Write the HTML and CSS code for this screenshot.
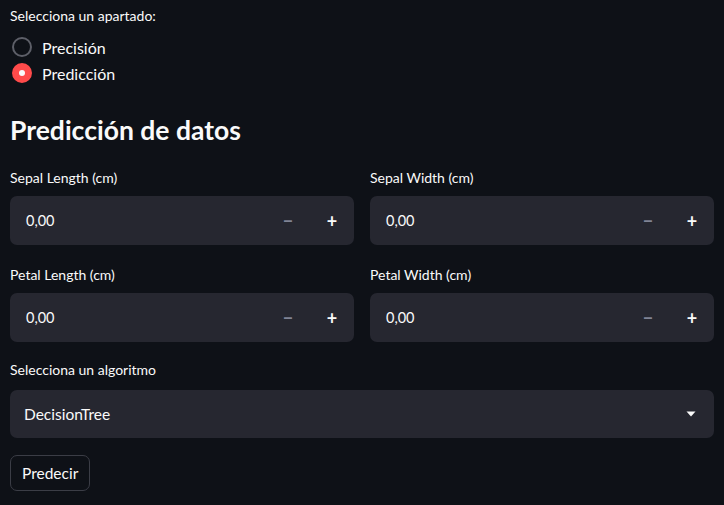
FILE: index.html
```html
<!DOCTYPE html>
<html lang="es">
<head>
<meta charset="utf-8">
<link rel="stylesheet" href="styles.css">
</head>
<body>
<main class="app">
  <section class="radio-group">
    <div class="label first">Selecciona un apartado:</div>
    <div class="options">
      <div class="option"><span class="dot"></span><span>Precisión</span></div>
      <div class="option"><span class="dot on"></span><span>Predicción</span></div>
    </div>
  </section>

  <h2 class="title">Predicción de datos</h2>

  <section class="grid">
    <div class="field">
      <div class="label">Sepal Length (cm)</div>
      <div class="num">
        <span class="val">0,00</span>
        <span class="step minus">−</span>
        <span class="step plus">+</span>
      </div>
    </div>
    <div class="field">
      <div class="label">Sepal Width (cm)</div>
      <div class="num">
        <span class="val">0,00</span>
        <span class="step minus">−</span>
        <span class="step plus">+</span>
      </div>
    </div>
    <div class="field">
      <div class="label">Petal Length (cm)</div>
      <div class="num">
        <span class="val">0,00</span>
        <span class="step minus">−</span>
        <span class="step plus">+</span>
      </div>
    </div>
    <div class="field">
      <div class="label">Petal Width (cm)</div>
      <div class="num">
        <span class="val">0,00</span>
        <span class="step minus">−</span>
        <span class="step plus">+</span>
      </div>
    </div>
  </section>

  <section class="field select-field">
    <div class="label">Selecciona un algoritmo</div>
    <div class="select">
      <span class="val">DecisionTree</span>
      <svg class="caret" width="10" height="6" viewBox="0 0 10 6"><path d="M0.5 0.5h9L5 5.5z" fill="#fafafa"/></svg>
    </div>
  </section>

  <button class="btn">Predecir</button>
</main>
</body>
</html>
```

FILE: styles.css
```css
html, body {
  margin: 0;
  padding: 0;
  background: #0e1117;
}
body {
  font-family: Lato, "Noto Sans", sans-serif;
  color: #fafafa;
}
.app {
  padding: 0 10px;
  display: flex;
  flex-direction: column;
}
.label {
  font-size: 14px;
  line-height: 20px;
  height: 20px;
}
.label.first {
  margin-top: 6px;
}
.options {
  margin-top: 8px;
  display: flex;
  flex-direction: column;
}
.option {
  height: 26px;
  display: flex;
  align-items: center;
  gap: 10px;
  font-size: 16px;
}
.dot {
  width: 20px;
  height: 20px;
  box-sizing: border-box;
  border-radius: 50%;
  border: 2px solid #5d5f68;
  margin-left: 2px;
  display: flex;
  align-items: center;
  justify-content: center;
}
.dot.on {
  background: #ff4b4b;
  border-color: #ff4b4b;
}
.dot.on::after {
  content: "";
  width: 6px;
  height: 6px;
  border-radius: 50%;
  background: #fafafa;
}
.title {
  margin: 24px 0 0;
  font-size: 26.5px;
  font-weight: 700;
  line-height: 40px;
  height: 40px;
}
.grid {
  margin-top: 18px;
  display: grid;
  grid-template-columns: 1fr 1fr;
  column-gap: 16px;
  row-gap: 20px;
}
.field .label {
  margin-bottom: 8px;
}
.num, .select {
  height: 49px;
  background: #262730;
  border-radius: 7px;
  display: flex;
  align-items: center;
  font-size: 14.5px;
}
.val {
  flex: 1;
  padding-left: 16px;
}
.step {
  width: 44px;
  text-align: center;
  font-size: 18px;
  font-weight: 700;
}
.minus {
  color: #808495;
}
.plus {
  color: #fafafa;
}
.select-field {
  margin-top: 18px;
}
.select-field .label {
  margin-bottom: 10px;
}
.select {
  height: 48px;
}
.select .val {
  padding-left: 14px;
  font-size: 15.5px;
}
.caret {
  margin-right: 18px;
}
.btn {
  margin-top: 17px;
  align-self: flex-start;
  height: 36px;
  padding: 0 11px;
  background: #0e1117;
  color: #fafafa;
  border: 1px solid #3b3d46;
  border-radius: 7px;
  font-family: Lato, "Noto Sans", sans-serif;
  font-size: 15.5px;
}
```
